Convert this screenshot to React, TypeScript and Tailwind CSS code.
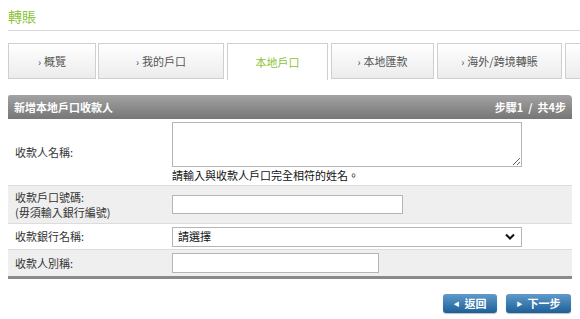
import React from "react";

const font = { fontFamily: '"Noto Sans CJK TC", "Noto Sans CJK SC", "Liberation Sans", sans-serif' };

function Tab({ label, w, ml, active }: { label: string; w: string; ml: string; active?: boolean }) {
  if (active) {
    return (
      <div className={`${w} ${ml} h-[37px] shrink-0 border border-b-0 border-[#cfcfcf] bg-white flex items-center justify-center text-[11px] text-[#8cc43a]`}>
        {label}
      </div>
    );
  }
  return (
    <div className={`${w} ${ml} h-[36px] shrink-0 border border-[#cfcfcf] bg-gradient-to-b from-white to-[#ececec] flex items-center justify-center text-[11px] text-[#555]`}>
      {label && <span className="text-[#1d4f85] text-[10px] mr-[3px]">›</span>}
      {label}
    </div>
  );
}

export default function App() {
  return (
    <div className="w-[580px] h-[319px] overflow-hidden bg-white" style={font}>
      <div className="pl-2">
        <div className="pt-[7px] h-[30px] text-[14px] leading-[18px] text-[#8cc43a]">轉賬</div>
        <div className="h-px bg-[#d8d8d8]" />
        <div className="flex mt-[12px] items-start">
          <Tab label="概覽" w="w-[88px]" ml="ml-0" />
          <Tab label="我的戶口" w="w-[126px]" ml="ml-[2px]" />
          <Tab label="本地戶口" w="w-[101px]" ml="ml-[3px]" active />
          <Tab label="本地匯款" w="w-[103px]" ml="ml-[3px]" />
          <Tab label="海外/跨境轉賬" w="w-[125px]" ml="ml-[3px]" />
          <Tab label="" w="w-[100px]" ml="ml-[3px]" />
        </div>
        <div className="w-[564px] mt-[15px]">
          <div className="h-[24px] rounded-tr-[4px] rounded-tl-[2px] bg-gradient-to-b from-[#a3a3a3] to-[#767676] flex items-center justify-between px-[6px] text-[11px] font-bold text-white">
            <span>新增本地戶口收款人</span>
            <span>步驟1 &nbsp;/&nbsp; 共4步</span>
          </div>
          <div className="flex items-center h-[66px] bg-white text-[11px] text-[#333]">
            <div className="w-[164px] pl-[7px]">收款人名稱:</div>
            <div className="flex flex-col pt-[0px]">
              <textarea className="w-[350px] h-[45px] border border-[#b5b5b5] bg-white block" />
              <div className="text-[11px] leading-[14px] mt-[1px] text-[#111]">請輸入與收款人戶口完全相符的姓名。</div>
            </div>
          </div>
          <div className="flex items-center h-[38px] bg-[#efefef] border-t border-[#dcdcdc] text-[11px] text-[#333]">
            <div className="w-[164px] pl-[7px] leading-[15px]">
              <div>收款戶口號碼:</div>
              <div>(毋須輸入銀行編號)</div>
            </div>
            <div className="w-[231px] h-[19px] border border-[#b5b5b5] bg-white" />
          </div>
          <div className="flex items-center h-[26px] bg-white border-t border-[#dcdcdc] text-[11px] text-[#333]">
            <div className="w-[164px] pl-[7px]">收款銀行名稱:</div>
            <div className="w-[350px] h-[20px] border border-[#b5b5b5] bg-white flex items-center justify-between pl-[5px] pr-[6px] text-[#111]">
              <span>請選擇</span>
              <svg width="10" height="7" viewBox="0 0 10 7">
                <path d="M1 1.5 L5 5.5 L9 1.5" stroke="#111" strokeWidth="2" fill="none" />
              </svg>
            </div>
          </div>
          <div className="flex items-center h-[27px] bg-[#efefef] border-t border-[#dcdcdc] text-[11px] text-[#333]">
            <div className="w-[164px] pl-[7px]">收款人別稱:</div>
            <div className="w-[207px] h-[20px] border border-[#b5b5b5] bg-white" />
          </div>
          <div className="h-[3px] bg-[#8a8a8a]" />
          <div className="flex justify-end gap-[9px] mt-[15px] pr-[1px]">
            <div className="w-[54px] h-[19px] rounded-[3px] bg-gradient-to-b from-[#5f9bcb] to-[#1b5f97] flex items-center justify-center text-[11px] font-bold text-white shadow-[0_1px_1px_rgba(0,0,0,0.25)]">
              <span className="text-[6px] mr-[5px]">◀</span>返回
            </div>
            <div className="w-[65px] h-[19px] rounded-[3px] bg-gradient-to-b from-[#5f9bcb] to-[#1b5f97] flex items-center justify-center text-[11px] font-bold text-white shadow-[0_1px_1px_rgba(0,0,0,0.25)]">
              <span className="text-[6px] mr-[5px]">▶</span>下一步
            </div>
          </div>
        </div>
      </div>
    </div>
  );
}
